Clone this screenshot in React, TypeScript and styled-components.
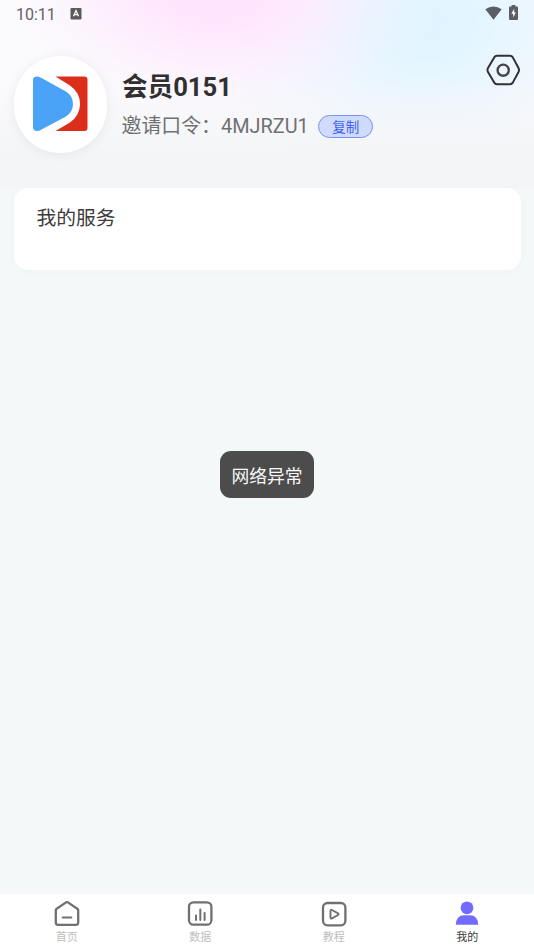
import React from "react";
import styled, { createGlobalStyle } from "styled-components";

const GlobalStyle = createGlobalStyle`
  * { box-sizing: border-box; }
  body {
    margin: 0;
    font-family: Roboto, "Noto Sans CJK SC", sans-serif;
    background: #f4f8f9;
  }
`;

const Screen = styled.main`
  position: relative;
  display: flex;
  flex-direction: column;
  width: 534px;
  height: 950px;
  overflow: hidden;
  background: #f4f8f9;
`;

const Header = styled.header`
  height: 188px;
  flex: none;
  background:
    linear-gradient(to bottom, rgba(244, 245, 247, 0) 80px, #f4f5f7 156px),
    radial-gradient(ellipse 235px 155px at 216px -14px, #ffe3fc 0%, #ffe6fd 25%, rgba(255, 233, 253, 0.7) 45%, rgba(253, 238, 254, 0.38) 66%, rgba(252, 243, 254, 0.1) 86%, rgba(252, 243, 254, 0) 100%),
    radial-gradient(ellipse 240px 175px at 420px 20px, #e0f4ff 0%, #e2f5ff 22%, rgba(232, 245, 255, 0.8) 45%, rgba(240, 247, 255, 0.5) 70%, rgba(247, 249, 254, 0.12) 90%, rgba(247, 249, 254, 0) 100%),
    #fbfbfd;
`;

const StatusBar = styled.div`
  display: flex;
  align-items: center;
  height: 28px;
  padding: 0 16px;
  color: #626266;
`;

const Clock = styled.time`
  width: 54px;
  padding-top: 1px;
  font-size: 16px;
  line-height: 27px;
`;

const StatusIcons = styled.div`
  display: flex;
  align-items: center;
  gap: 7px;
  margin: -3px 0 0 auto;
`;

const Profile = styled.section`
  display: flex;
  padding: 28px 14px 0 14px;
`;

const Avatar = styled.div`
  display: grid;
  place-items: center;
  width: 93px;
  height: 97px;
  padding: 0 1px 1px 0;
  border-radius: 47px;
  background: #fff;
  box-shadow: 0 1px 12px rgba(0, 0, 0, 0.07);
`;

const Identity = styled.div`
  flex: 1;
  padding: 13px 0 0 15px;
`;

const MemberName = styled.h1`
  margin: 0;
  font-size: 25.6px;
  line-height: 36px;
  font-weight: 700;
  color: #303030;
`;

const InviteRow = styled.div`
  display: flex;
  align-items: center;
  height: 24px;
  margin: 9px 0 0 -0.5px;
  color: #707072;
  white-space: nowrap;
`;

const InviteCode = styled.span`
  padding-top: 2px;
  font-size: 19.9px;
  line-height: 24px;
`;

const CopyButton = styled.button`
  width: 55px;
  height: 23px;
  margin-left: 9px;
  padding: 1px 0 0 1px;
  border: 1px solid #7893f5;
  border-radius: 12px;
  background: #d0dafc;
  color: #3e62f3;
  font: 400 13.5px/20px Roboto, "Noto Sans CJK SC", sans-serif;
`;

const SettingsButton = styled.button`
  width: 35px;
  height: 32px;
  margin: -2px -1.4px 0 0;
  padding: 0;
  border: 0;
  background: none;
`;

const Services = styled.section`
  flex: none;
  width: 507px;
  height: 82px;
  margin-left: 14px;
  padding: 16px 22.5px;
  border-radius: 14px;
  background: #fff;
  box-shadow: 0 1px 9px rgba(40, 60, 90, 0.025);
`;

const ServicesTitle = styled.h2`
  margin: 0;
  font-size: 19.8px;
  line-height: 30px;
  font-weight: 400;
  color: #3c3c3c;
`;

const Toast = styled.div`
  position: absolute;
  left: 220px;
  top: 451px;
  width: 94px;
  height: 47px;
  border-radius: 11px;
  background: #4b4c4b;
  color: #f8f8f8;
  font-size: 17.8px;
  line-height: 51px;
  text-align: center;
`;

const TabBar = styled.nav`
  display: grid;
  grid-template-columns: repeat(4, 1fr);
  height: 56px;
  margin-top: auto;
  background: #fff;
`;

const Tab = styled.div<{ $active?: boolean }>`
  display: flex;
  flex-direction: column;
  align-items: center;
  padding-top: 6px;
  font-size: 11px;
  line-height: 16px;
  color: ${(p) => (p.$active ? "#3a3a3a" : "#bebebe")};
  svg { margin-bottom: 3px; }
`;

const Icon = styled.svg`
  display: block;
  flex: none;
  overflow: visible;
`;

const Logo = () => (
  <Icon width="56" height="56" viewBox="0 0 56 56">
    <path d="M23.5 .5H52.5Q55.5 .5 55.5 3.5V52Q55.5 55 52.5 55H23.5L38 46.5Q48 39.5 48 28T38 9.5Z" fill="#dc2f1b" />
    <path d="M1 4Q1 .5 5 .5Q7.5 .5 9.5 2L34 15.5Q41 20 41 28T34 40.5L9.5 53.5Q7 55 5 55Q1 55 1 51Z" fill="#4ba3f7" />
  </Icon>
);

const KeyboardIcon = () => (
  <Icon width="12" height="12" viewBox="0 0 12 12">
    <rect x=".5" y="0" width="11" height="11.5" rx="1" fill="#59595c" />
    <path d="M3.5 8.3 6 2.6l2.5 5.7M4.4 6.6h3.2" fill="none" stroke="#fff" strokeWidth="1.3" />
  </Icon>
);

const WifiIcon = () => (
  <Icon width="17" height="14" viewBox="0 0 17 14">
    <path d="M.3 3.3Q8.5-2.3 16.7 3.3L8.5 13.8Z" fill="#5b5e62" />
  </Icon>
);

const BatteryIcon = () => (
  <Icon width="9" height="15" viewBox="0 0 9 15">
    <path d="M2.6 0h3.8v1.5H8q1 0 1 1V14q0 1-1 1H1q-1 0-1-1V2.5q0-1 1-1h1.6Z" fill="#5b5e62" />
    <path d="M5.2 3.8 2.3 8.7h1.9v3.8l2.7-5.1H5.2Z" fill="#fff" />
  </Icon>
);

const SettingsIcon = () => (
  <Icon width="35" height="32" viewBox="0 0 35 32">
    <g fill="none" stroke="#303234" strokeWidth="2">
      <path d="M11 1.8H24Q25.8 1.8 26.8 3.4L32.5 14Q33.5 16 32.5 18L26.8 28.6Q25.8 30.2 24 30.2H11Q9.2 30.2 8.2 28.6L2 18Q1 16 2 14L8.2 3.4Q9.2 1.8 11 1.8Z" />
      <circle cx="17.2" cy="16.2" r="5.6" stroke="#464648" strokeWidth="2.4" />
    </g>
  </Icon>
);

const tabStroke = { fill: "none", stroke: "#707072", strokeWidth: 2.3, strokeLinecap: "round" as const, strokeLinejoin: "round" as const };

const HomeIcon = () => (
  <Icon width="26" height="27" viewBox="0 0 26 27" {...tabStroke}>
    <path d="M1.8 10.3Q1.8 9.4 2.7 8.8L11.7 2.6Q13 1.8 14.3 2.6L23.3 8.8Q24.2 9.4 24.2 10.3V22.5Q24.2 24.9 21.7 24.9H4.3Q1.8 24.9 1.8 22.5Z" />
    <path d="M8.7 17.5h8.6" strokeWidth="2" />
  </Icon>
);

const DataIcon = () => (
  <Icon width="26" height="27" viewBox="0 0 26 27" {...tabStroke}>
    <rect x="2" y="2.3" width="22.4" height="22.4" rx="4.5" />
    <path d="M9 15.5v4.5M13.3 9.5V20M17.6 13v7" strokeWidth="2" />
  </Icon>
);

const LessonIcon = () => (
  <Icon width="26" height="27" viewBox="0 0 26 27" {...tabStroke}>
    <rect x="2" y="3" width="22.4" height="22.3" rx="4.5" />
    <path d="M9.5 10.8Q9.5 9.3 11 10L17 13.3Q18.2 14.2 17 15L11 18.3Q9.5 19 9.5 17.5Z" strokeWidth="1.9" />
  </Icon>
);

const PersonIcon = () => (
  <Icon width="26" height="27" viewBox="0 0 26 27" fill="#716cff">
    <circle cx="13" cy="7.8" r="6.4" />
    <path d="M1.8 24.8Q2.2 15.2 10 15.2h6Q23.8 15.2 24.2 24.8Z" />
  </Icon>
);

const tabs = [
  { label: "首页", Glyph: HomeIcon },
  { label: "数据", Glyph: DataIcon },
  { label: "教程", Glyph: LessonIcon },
  { label: "我的", Glyph: PersonIcon, active: true },
];

export default function App() {
  return (
    <>
      <GlobalStyle />
      <Screen>
        <Header>
          <StatusBar>
            <Clock>10:11</Clock>
            <KeyboardIcon />
            <StatusIcons>
              <WifiIcon />
              <BatteryIcon />
            </StatusIcons>
          </StatusBar>
          <Profile>
            <Avatar><Logo /></Avatar>
            <Identity>
              <MemberName>会员0151</MemberName>
              <InviteRow>
                <InviteCode>邀请口令：4MJRZU1</InviteCode>
                <CopyButton>复制</CopyButton>
              </InviteRow>
            </Identity>
            <SettingsButton aria-label="设置"><SettingsIcon /></SettingsButton>
          </Profile>
        </Header>
        <Services>
          <ServicesTitle>我的服务</ServicesTitle>
        </Services>
        <TabBar>
          {tabs.map(({ label, Glyph, active }) => (
            <Tab key={label} $active={active}>
              <Glyph />
              {label}
            </Tab>
          ))}
        </TabBar>
        <Toast role="status">网络异常</Toast>
      </Screen>
    </>
  );
}
